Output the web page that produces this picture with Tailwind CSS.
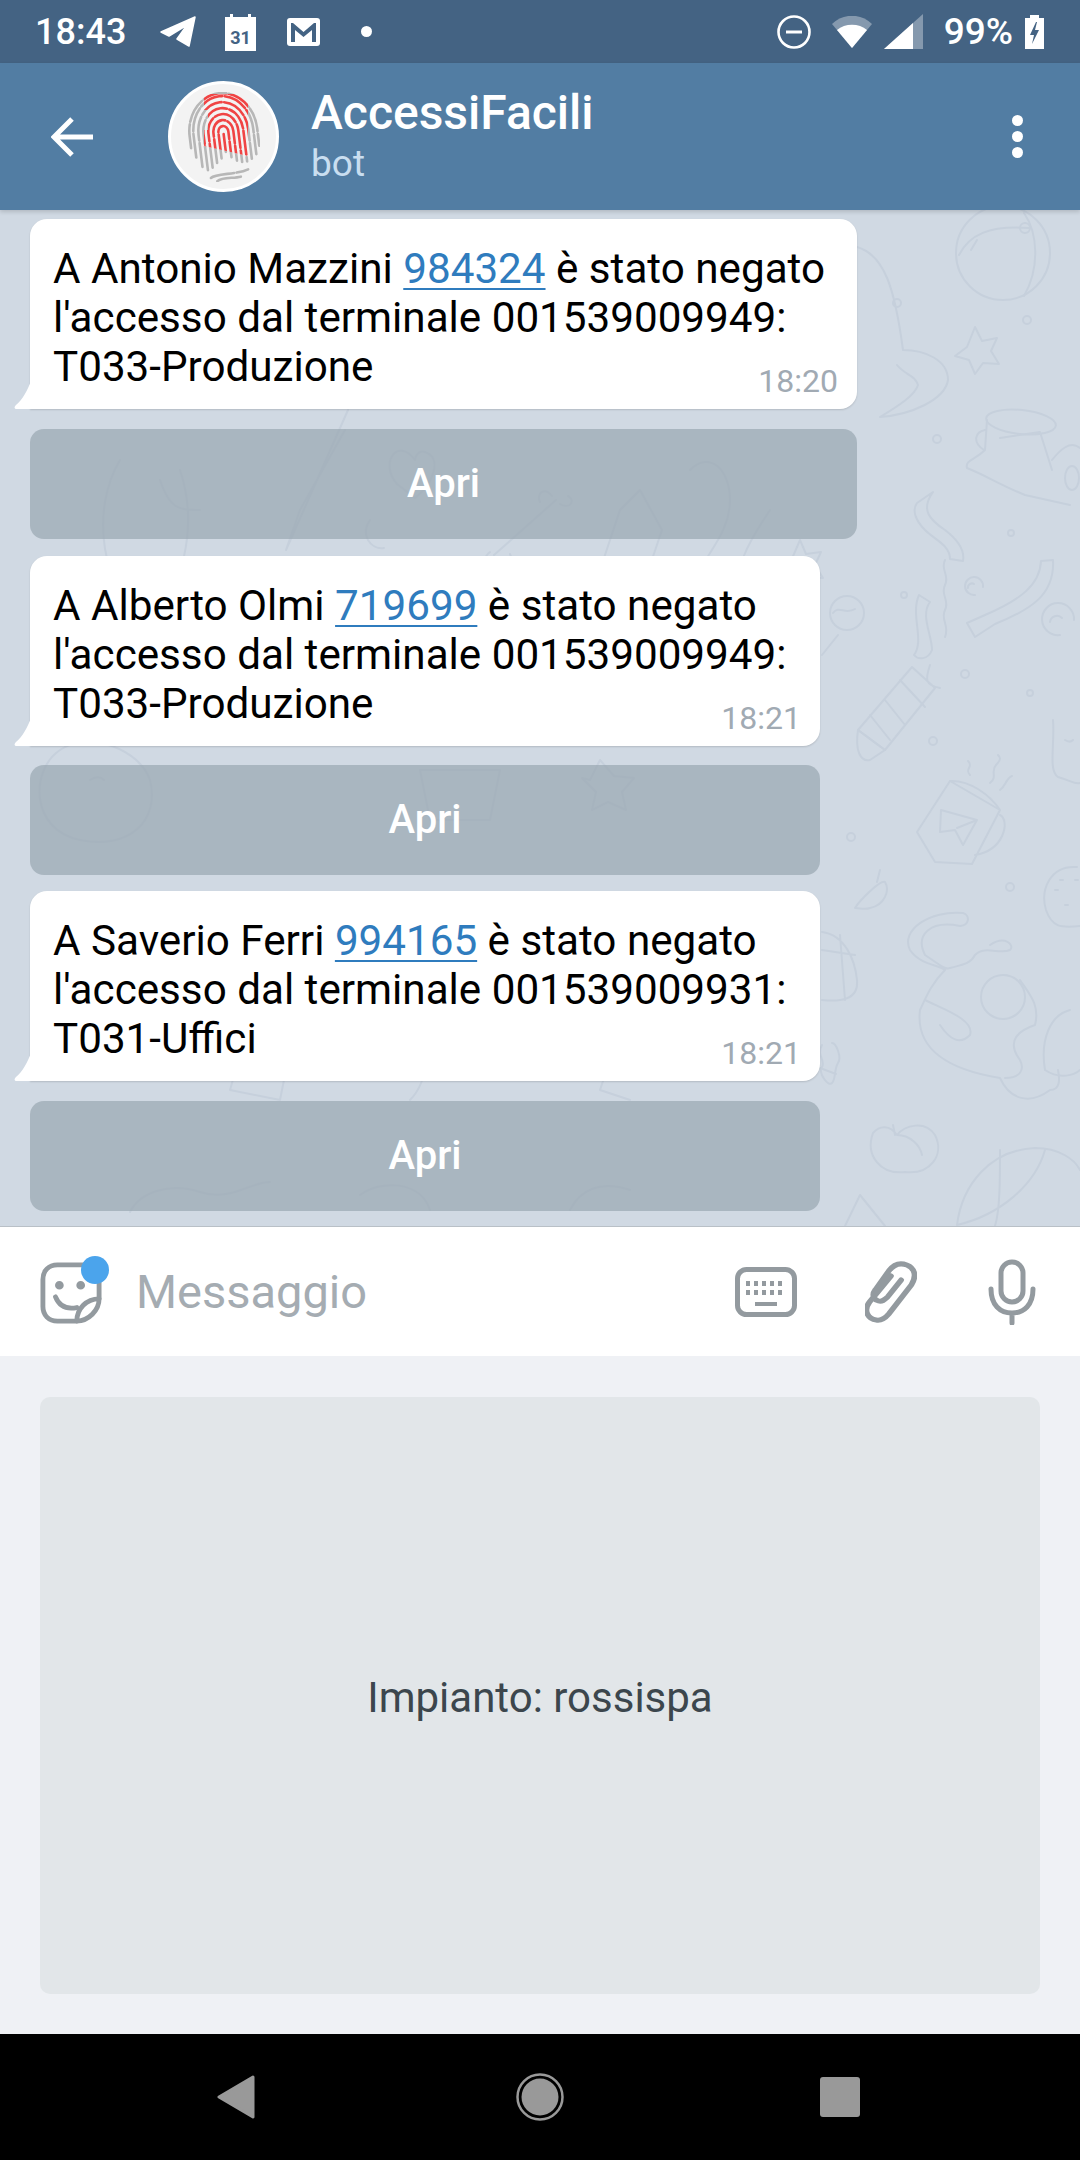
<!DOCTYPE html>
<html lang="en">
<head>
<meta charset="UTF-8">
<title>AccessiFacili</title>
<script src="https://cdn.jsdelivr.net/npm/@tailwindcss/browser@4"></script>
</head>
<body class="bg-black">
<div class="w-[1080px] h-[2160px] flex flex-col font-['Roboto',sans-serif] overflow-hidden">

  <!-- status bar -->
  <div class="h-[63px] bg-[#446383] flex items-center justify-between pl-[35px] pr-[36px] text-white shrink-0">
    <div class="flex items-center">
      <span class="text-[36px] font-medium w-[100px]">18:43</span>
      <svg class="ml-[25px]" width="36" height="32" viewBox="0 0 36 32" fill="#fff"><path d="M1 16 35 1 29 30 17 23 27 9 9 20Z" stroke="#fff" stroke-width="1.500" stroke-linejoin="round"/></svg>
      <svg class="ml-[27px]" width="35" height="38" viewBox="0 0 35 38"><path d="M2 4h5V1h3v3h15V1h3v3h5v34H2Z" fill="#fff"/><text x="17.500" y="31" font-size="18" font-weight="700" text-anchor="middle" fill="#446383" font-family="Roboto">31</text></svg>
      <svg class="ml-[29px]" width="33" height="28" viewBox="0 0 33 28"><rect width="33" height="28" rx="3" fill="#fff"/><path d="M4 24V5h2l10.500 9L27 5h2v19h-4V12l-8.500 7L8 12v12Z" fill="#446383"/></svg>
      <span class="ml-[41px] w-[11px] h-[11px] rounded-full bg-white"></span>
    </div>
    <div class="flex items-center">
      <svg width="34" height="34" viewBox="0 0 34 34" fill="none"><circle cx="17" cy="17" r="15.500" stroke="#fff" stroke-width="2.600"/><path d="M9 17h16" stroke="#fff" stroke-width="3"/></svg>
      <svg class="ml-[21px]" width="40" height="32" viewBox="0 0 40 32"><path d="M0 8C11-3 29-3 40 8L20 32Z" fill="#fff" fill-opacity=".35"/><path d="M5 14C13 7 27 7 35 14L20 32Z" fill="#fff"/></svg>
      <svg class="ml-[12px]" width="39" height="35" viewBox="0 0 39 35"><path d="M39 0V35H0Z" fill="#fff" fill-opacity=".35"/><path d="M29 9V35H0Z" fill="#fff"/></svg>
      <span class="ml-[21px] text-[37px] font-medium leading-none">99%</span>
      <svg class="ml-[12px]" width="19" height="34" viewBox="0 0 19 34"><path fill-rule="evenodd" d="M5 0h9v3h5v31H0V3h5ZM11 7 5 20h4l-2 9 7-14h-4l2-8Z" fill="#fff"/></svg>
    </div>
  </div>

  <!-- header -->
  <div class="h-[147px] bg-[#527da3] flex items-center shrink-0 relative z-10 shadow-[0_2px_4px_rgba(0,0,0,0.15)]">
    <svg class="ml-[51px]" width="42" height="42" viewBox="0 0 42 42" fill="none" stroke="#fff" stroke-width="5"><path d="M42 21H4M21 3 3 21l18 18"/></svg>
    <div class="ml-[75px] w-[111px] h-[111px] rounded-full bg-[#f3f3f3] border-[3px] border-white flex items-center justify-center">
      <svg width="72" height="90" viewBox="0 0 72 90" fill="none" stroke-width="2.600" stroke-linecap="round">
        <defs>
          <clipPath id="redPart"><path d="M16 2H60V64L16 54V38H20V18H16Z"/></clipPath>
          <g id="ridges" transform="rotate(-7 36 45)" stroke-dasharray="24 2.500">
            <path d="M36 60V42"/>
            <path d="M31 66V40A5 6 0 0 1 41 40V66"/>
            <path d="M26 70V40A10 12 0 0 1 46 40V70"/>
            <path d="M21 74V40A15 18 0 0 1 51 40V72"/>
            <path d="M16 76V40A20 24 0 0 1 56 40V72"/>
            <path d="M11 72V40A25 30 0 0 1 61 40V70"/>
            <path d="M6 62V40A30 36 0 0 1 66 40V66"/>
            <path d="M2 52V40A34 39 0 0 1 70 40V58"/>
            <path d="M18 84C24 80 44 84 56 80"/>
            <path d="M24 88C30 84 42 88 50 86"/>
          </g>
        </defs>
        <use href="#ridges" stroke="#b7b7b7"/>
        <g clip-path="url(#redPart)"><rect x="14" y="0" width="48" height="66" fill="#f3f3f3" stroke="none"/><use href="#ridges" stroke="#f04444"/></g>
      </svg>
    </div>
    <div class="ml-[32px] flex flex-col">
      <span class="text-[48px] font-medium text-white leading-[56px] mt-[-3px]">AccessiFacili</span>
      <span class="text-[37px] text-[#c9def0] leading-[44px] mt-[1px]">bot</span>
    </div>
    <div class="ml-auto mr-[57px] flex flex-col gap-[5px]">
      <span class="w-[11px] h-[11px] rounded-full bg-white"></span>
      <span class="w-[11px] h-[11px] rounded-full bg-white"></span>
      <span class="w-[11px] h-[11px] rounded-full bg-white"></span>
    </div>
  </div>

  <!-- chat -->
  <div class="relative h-[1016px] bg-[#d0d9e3] shrink-0 overflow-hidden">
    <!-- wallpaper doodles -->
    <svg class="absolute inset-0" width="1080" height="1016" fill="none" stroke="#c6d0dc" stroke-width="2" stroke-linecap="round" stroke-linejoin="round">
      <circle cx="1003" cy="43" r="47"/><path d="M959 45c10-20 30-30 70-27M1024 3c14 20 16 55 0 83M977 30l-6 10"/><circle cx="1025" cy="18" r="5"/>
      <path d="M975 117l7 14 15-3-6 13 8 13-16-1-8 11-6-14-14-4 12-9z"/>
      <path d="M857 37C885 45 895 80 903 140 925 140 948 150 948 170 945 190 910 205 880 207 900 195 915 185 918 175 915 165 905 165 897 155"/>
      <circle cx="897" cy="93" r="4"/><circle cx="1027" cy="110" r="4"/><circle cx="937" cy="229" r="4"/><circle cx="1011" cy="323" r="3"/><circle cx="904" cy="385" r="3"/><circle cx="965" cy="464" r="4"/><circle cx="1030" cy="483" r="3"/><circle cx="933" cy="531" r="4"/><circle cx="851" cy="627" r="4"/><circle cx="1010" cy="677" r="4"/>
      <ellipse cx="1021" cy="212" rx="35" ry="12" transform="rotate(6 1021 212)"/>
      <path d="M987 210 985 240C975 250 965 250 967 258 985 265 1000 275 1025 285L1070 295M1000 228 1040 222 1052 260M985 220C975 222 972 232 984 240M1052 250C1060 240 1070 230 1080 238"/>
      <ellipse cx="1072" cy="268" rx="7" ry="12"/>
      <path d="M917 293 933 282C920 300 930 310 945 320 958 330 965 340 963 351L950 349C950 335 935 330 925 320 915 310 912 300 917 293Z"/>
      <path d="M1053 350 1041 351C1040 375 1020 390 985 405L967 413 975 427 995 414C1030 400 1055 385 1053 350Z"/>
      <path d="M919 385 930 392C920 405 932 425 932 440 928 450 918 450 914 445 925 430 910 405 919 385Z"/>
      <path d="M945 350C940 360 950 365 945 375S950 390 945 400 950 415 945 427"/>
      <path d="M975 385a9 9 0 1 1 8-8M968 378a4 4 0 0 1 6-4"/><path d="M1060 425a16 16 0 1 1 14-15M1050 412a7 7 0 0 1 12-4"/>
      <path d="M912 457 935 478 885 540 858 520ZM930 455C925 470 925 475 940 478M900 470 925 497M885 490 905 515M870 505 890 530"/>
      <path d="M858 520 885 540 870 550C860 552 855 540 858 520Z"/>
      <circle cx="847" cy="403" r="17"/><path d="M838 425 822 445M833 403c6-8 12 2 22-4"/>
      <path d="M950 571 1000 600 972 654 935 652 917 622ZM950 571C970 570 990 585 1000 600M1000 605C1010 610 1005 640 975 645"/>
      <path d="M941 600 977 610 963 635 955 620 940 622ZM957 618 977 610"/>
      <path d="M970 565c-6-6 4-8-2-14M990 573c8-6 0-12 6-18s4-8 2-10M1000 580c6-4 6-12 12-14"/>
      <path d="M855 698C860 690 880 670 885 672 890 680 885 695 870 698 865 700 860 698 855 698ZM880 660 877 672"/>
      <path d="M1077 657C1050 655 1040 680 1046 700 1052 717 1060 718 1080 716M1055 680h3M1065 695h3M1060 670h3M1075 670h3"/>
      <path d="M963 703C930 700 900 720 910 740 920 755 940 755 945 760 930 775 925 790 920 800 915 840 950 860 1000 868 1010 890 1030 895 1050 880 1060 880 1060 870 1058 860M963 703C970 705 970 715 960 716 930 710 915 725 925 745 940 755 945 760 950 758 960 755 970 755 975 745 985 735 1000 745 1010 740 1015 735 1005 725 990 735"/>
      <circle cx="1003" cy="787" r="22"/><path d="M1020 770C1030 785 1040 795 1035 815 1020 820 1005 830 1020 850 1025 860 1020 868 1005 868M925 790C945 800 975 810 970 825 960 835 950 830 940 815"/>
      <path d="M1070 800C1050 805 1040 830 1045 860 1060 870 1075 865 1080 860"/>
      <path d="M822 722C845 725 855 750 857 770S840 792 822 790M822 740 855 745M840 725 845 790"/>
      <path d="M822 835c-6 10 4 16 0 22s6 20 10 16 2-14 6-20-2-20-6-20M820 858l16 6"/>
      <path d="M873 923C880 915 890 915 897 925 905 915 925 910 935 925 945 945 930 965 905 962 880 965 865 945 873 923ZM893 915 895 925M897 925C910 925 920 935 922 945"/>
      <path d="M957 1015C962 975 990 940 1035 938 1060 938 1075 950 1080 960M1000 940C1000 970 1000 1000 995 1016M1045 940C1035 975 1000 1005 957 1015"/>
      <path d="M845 1016 860 985 885 1016"/>
      <path d="M1053 510C1055 535 1048 560 1058 567 1070 570 1075 575 1080 573M1065 530c3 2 6 2 8 0"/>
      <!-- left side, mostly seen through the buttons -->
      <path d="M494 345 556 290M490 342c-10 8-2 16 6 12M498 350c8 10 16 2 12-6M552 286c-8-10-16-2-12 6M560 294c10 6 16-4 8-8"/>
      <path d="M348 200 286 340 300 300 345 220"/><path d="M415 250c-18-24-36 4-18 24l18 14c18-14 28-40 10-46-6-2-10 4-10 8Z"/>
      <path d="M620 300 590 390 630 365 640 385 662 320 640 280Z"/>
      <path d="M690 260c20-20 40 0 40 30s-20 50-30 70M770 300c-20 30-40 60-30 100"/><path d="M800 330l6 14 15-2-6 13 8 13-16-1-8 11-6-14-14-4 12-9z"/>
      <path d="M120 250C90 300 100 380 150 420 180 380 200 320 180 260M160 270c10 30 20 30 40 30"/><path d="M370 310c-10 14 0 30 14 28M385 420c-20-20-60-10-60 20 0 20 30 20 40 10"/>
      <path d="M60 540c-30 20-30 80 20 90 50 10 80-20 70-60-10-30-60-50-90-30Z"/><path d="M90 570c6-4 10-4 14 0M420 560h80l-10 50h-60ZM590 570l10-20 14 16 20 2-12 14 4 18-18-8-16 8 4-18-14-14z"/>
      <path d="M130 1002c10-20 40-30 70-20 30 10 50 -10 70-10M360 985C380 970 420 970 430 1000M570 1000c10-20 30-30 60-20"/><path d="M720 810c-20-10-40 0-40 20s40 40 60 10-10-30-20-30ZM620 820l-20 60 30 10"/>
      <path d="M250 810l40 30-10 50-50-10ZM420 810c10 20 10 60-10 80M480 840l30-30 30 30-30 30z"/>
    </svg>
    <div class="relative flex flex-col items-start pt-[9px] pl-[30px]">
      <div class="relative w-[827px] h-[190px] bg-white rounded-[17px] rounded-bl-none pt-[25px] pl-[23px] text-[42.2px] leading-[49px] text-black shadow-[0_1px_2px_rgba(0,0,0,0.14)]">
        <svg class="absolute left-[-16px] bottom-0" width="17" height="28" viewBox="0 0 17 28"><path d="M17 0V28H3C0 28 0 26 2 24 9 18 13 10 17 0Z" fill="#fff"/></svg>
        <p class="whitespace-nowrap">A Antonio Mazzini <a class="text-[#2f7cbe] underline underline-offset-[5px] decoration-2">984324</a> è stato negato<br>l'accesso dal terminale 001539009949:<br>T033-Produzione</p>
        <span class="absolute right-[19px] bottom-[11px] text-[32px] leading-[34px] text-[#a1aab3]">18:20</span>
      </div>
      <div class="mt-[20px] w-[827px] h-[110px] rounded-[14px] bg-[#98a6b0]/70 flex items-center justify-center text-[40px] font-medium text-white">Apri</div>

      <div class="relative mt-[17px] w-[790px] h-[190px] bg-white rounded-[17px] rounded-bl-none pt-[25px] pl-[23px] text-[42.2px] leading-[49px] text-black shadow-[0_1px_2px_rgba(0,0,0,0.14)]">
        <svg class="absolute left-[-16px] bottom-0" width="17" height="28" viewBox="0 0 17 28"><path d="M17 0V28H3C0 28 0 26 2 24 9 18 13 10 17 0Z" fill="#fff"/></svg>
        <p class="whitespace-nowrap">A Alberto Olmi <a class="text-[#2f7cbe] underline underline-offset-[5px] decoration-2">719699</a> è stato negato<br>l'accesso dal terminale 001539009949:<br>T033-Produzione</p>
        <span class="absolute right-[19px] bottom-[11px] text-[32px] leading-[34px] text-[#a1aab3]">18:21</span>
      </div>
      <div class="mt-[19px] w-[790px] h-[110px] rounded-[14px] bg-[#98a6b0]/70 flex items-center justify-center text-[40px] font-medium text-white">Apri</div>

      <div class="relative mt-[16px] w-[790px] h-[190px] bg-white rounded-[17px] rounded-bl-none pt-[25px] pl-[23px] text-[42.2px] leading-[49px] text-black shadow-[0_1px_2px_rgba(0,0,0,0.14)]">
        <svg class="absolute left-[-16px] bottom-0" width="17" height="28" viewBox="0 0 17 28"><path d="M17 0V28H3C0 28 0 26 2 24 9 18 13 10 17 0Z" fill="#fff"/></svg>
        <p class="whitespace-nowrap">A Saverio Ferri <a class="text-[#2f7cbe] underline underline-offset-[5px] decoration-2">994165</a> è stato negato<br>l'accesso dal terminale 001539009931:<br>T031-Uffici</p>
        <span class="absolute right-[19px] bottom-[11px] text-[32px] leading-[34px] text-[#a1aab3]">18:21</span>
      </div>
      <div class="mt-[20px] w-[790px] h-[110px] rounded-[14px] bg-[#98a6b0]/70 flex items-center justify-center text-[40px] font-medium text-white">Apri</div>
    </div>
  </div>

  <!-- input -->
  <div class="h-[130px] bg-white flex items-center shrink-0 relative border-t border-[#b9c0c7]">
    <div class="relative ml-[40px] w-[62px] h-[62px] mt-[2px]">
      <svg width="62" height="62" viewBox="0 0 64 64" fill="none" stroke="#939a9f" stroke-width="5" stroke-linecap="round"><path d="M38 61H18C9 61 3 55 3 46V18C3 9 9 3 18 3H46C55 3 61 9 61 18V38C61 50 50 61 38 61Z"/><path d="M38 61C38 48 48 38 61 38"/><path d="M16 36c4 10 12 13 22 11"/><circle cx="20" cy="24" r="2" fill="#939a9f"/><circle cx="42" cy="24" r="2" fill="#939a9f"/></svg>
      <span class="absolute right-[-7px] top-[-6px] w-[28px] h-[28px] rounded-full bg-[#4ba4ec]"></span>
    </div>
    <span class="ml-[34px] mt-[2px] text-[47px] text-[#a5acb2]">Messaggio</span>
    <svg class="ml-auto" width="62" height="50" viewBox="0 0 62 50" fill="none"><rect x="2.500" y="2.500" width="57" height="45" rx="9" stroke="#939a9f" stroke-width="5"/><path d="M11 14h4v5h-4zM19 14h4v5h-4zM27 14h4v5h-4zM35 14h4v5h-4zM43 14h4v5h-4zM11 23h4v5h-4zM19 23h4v5h-4zM27 23h4v5h-4zM35 23h4v5h-4zM43 23h4v5h-4zM20 35h22v4H20z" fill="#939a9f"/></svg>
    <svg class="ml-[68px]" width="52" height="62" viewBox="7 0 46 62" fill="none" stroke="#939a9f" stroke-width="5" stroke-linecap="round" preserveAspectRatio="none"><path d="M30 15 11 41c-6 9-1 17 6 18 5 1 8-2 11-6L48 24c5-9 3-17-4-20-7-3-12 0-16 6L16 29c-4 6 0 10 3 11 3 1 5-1 8-4l12-17"/></svg>
    <svg class="ml-[71px] mr-[44px]" width="48" height="66" viewBox="0 0 48 66" fill="none" stroke="#939a9f" stroke-width="5" stroke-linecap="round"><rect x="13" y="3" width="22" height="40" rx="11"/><path d="M3 30c0 16 9 24 21 24s21-8 21-24M24 54v10"/></svg>
  </div>

  <!-- bot keyboard -->
  <div class="h-[678px] bg-[#eff1f5] shrink-0 px-[40px] pt-[41px]">
    <div class="h-[597px] rounded-[10px] bg-[#e2e6e9] pt-[3px] flex items-center justify-center text-[42px] text-[#3c464d]">Impianto: rossispa</div>
  </div>

  <!-- nav bar -->
  <div class="h-[126px] bg-black flex items-center shrink-0 relative">
    <svg class="ml-[217px]" width="38" height="44" viewBox="0 0 38 44"><path d="M36 2 2 22l34 20Z" fill="#999" stroke="#999" stroke-width="3" stroke-linejoin="round"/></svg>
    <svg class="ml-[261px]" width="48" height="48" viewBox="0 0 48 48"><circle cx="24" cy="24" r="22.500" fill="none" stroke="#999" stroke-width="2.500"/><circle cx="24" cy="24" r="18.500" fill="#999"/></svg>
    <div class="ml-[256px] w-[40px] h-[40px] rounded-[3px] bg-[#999]"></div>
  </div>
</div>
</body>
</html>
